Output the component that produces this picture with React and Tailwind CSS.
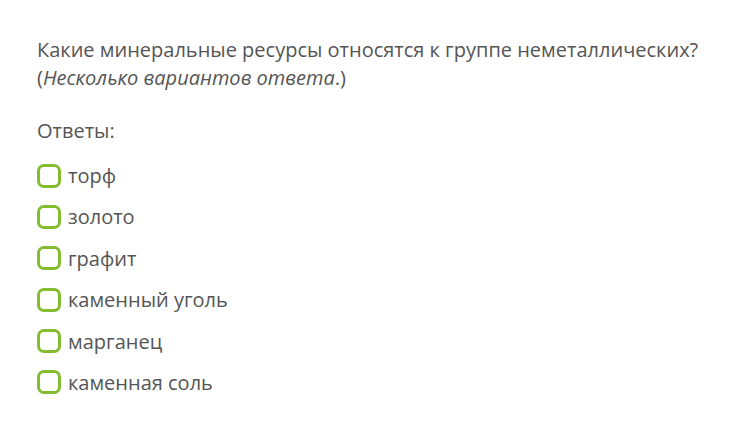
export default function App() {
  const options = ["торф", "золото", "графит", "каменный уголь", "марганец", "каменная соль"];

  return (
    <div className="min-h-screen bg-white text-[#555] font-['Open_Sans',sans-serif]">
      <div className="pl-[37px] pt-[36px]">
        {/* Question */}
        <p className="text-[20px] leading-[28px]">
          Какие минеральные ресурсы относятся к группе неметаллических?
          <br />(<i>Несколько вариантов ответа</i>.)
        </p>

        <p className="mt-[25px] text-[20px] leading-[28px]">Ответы:</p>

        {/* Options */}
        <div className="mt-[18px] flex flex-col gap-[16.4px]">
          {options.map((opt) => (
            <label key={opt} className="flex items-center gap-[7px] text-[20px] leading-[25px]">
              <span className="w-[24px] h-[24px] rounded-[7px] border-[3px] border-[#84bc30] bg-white shrink-0" />
              <span>{opt}</span>
            </label>
          ))}
        </div>
      </div>
    </div>
  );
}
